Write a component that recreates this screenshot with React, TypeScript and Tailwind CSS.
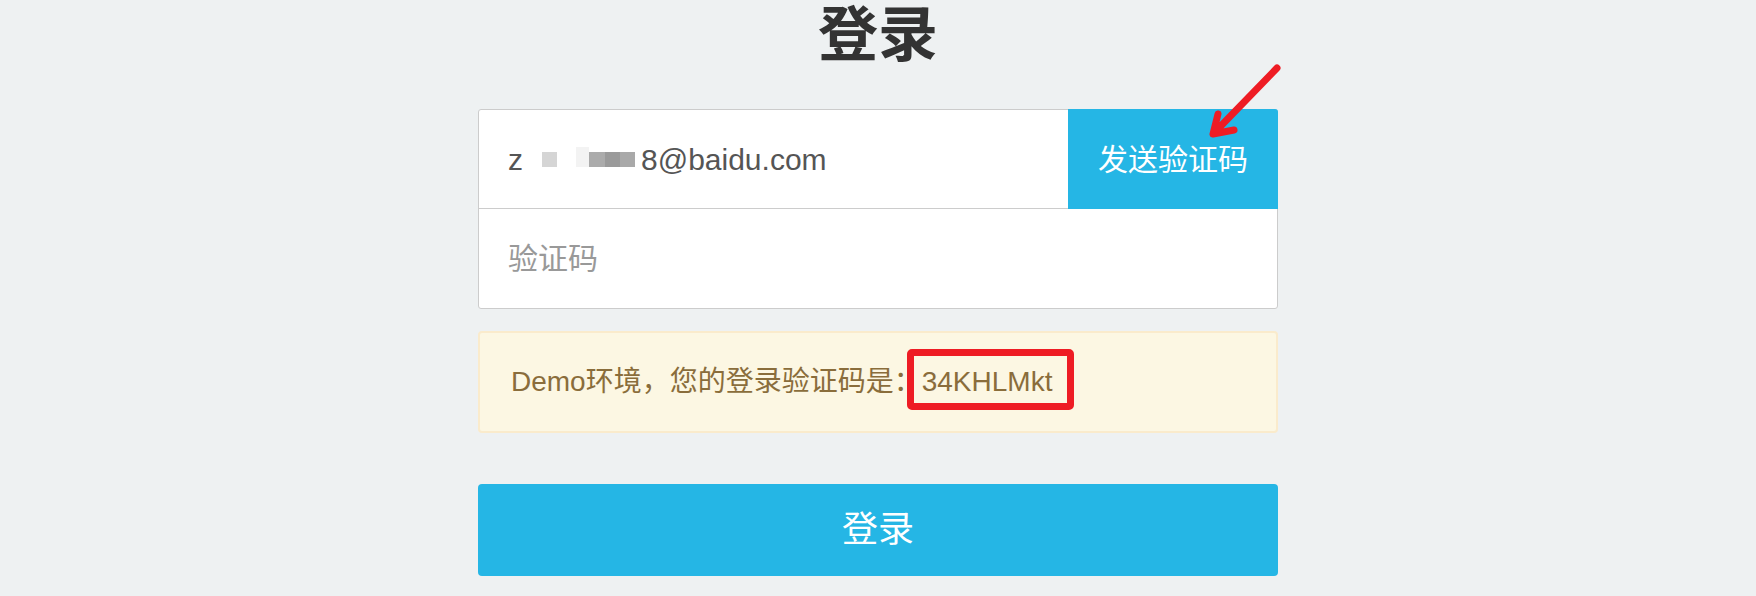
import React from 'react';

const fontStack = "font-['Liberation_Sans','Noto_Sans_CJK_SC',sans-serif]";

function MaskedEmail() {
  // blurred part of the address in the screenshot
  return (
    <div className="flex items-center">
      <span>z</span>
      <span className="ml-[19px] w-[15px] h-[15px] bg-[#d5d5d5]" />
      <span className="ml-[19px] w-[13px] h-[20px] bg-[#f3f3f3] self-start mt-[10px]" />
      <span className="w-[16px] h-[15px] bg-[#ababab]" />
      <span className="w-[15px] h-[15px] bg-[#9a9a9a]" />
      <span className="w-[15px] h-[15px] bg-[#a9a9a9]" />
      <span className="ml-[6px]">8@baidu.com</span>
    </div>
  );
}

export default function App() {
  return (
    <div className={`min-h-screen bg-[#eef1f2] ${fontStack}`}>
      <div className="relative w-[800px] mx-auto pt-[6px]">
        <h1 className="text-center text-[60px] leading-none font-bold text-[#333]">登录</h1>

        {/* Email + code inputs */}
        <div className="mt-[43px] bg-white border border-[#cccccc] rounded-[3px]">
          <div className="flex h-[99px] border-b border-[#cccccc]">
            <div className="flex-1 flex items-center pl-[29px] text-[30px] text-[#555]">
              <MaskedEmail />
            </div>
            <button className="-mt-px -mr-px w-[210px] h-[100px] bg-[#25b6e5] text-white text-[30px] rounded-tr-[3px]">
              发送验证码
            </button>
          </div>
          <div className="h-[99px] flex items-center pl-[29px] text-[30px] text-[#999]">
            验证码
          </div>
        </div>

        {/* Demo notice */}
        <div className="mt-[22px] h-[102px] flex items-center pl-[31px] bg-[#fcf7e3] border-2 border-[#faebcc] rounded-[4px] text-[28px] text-[#8a6d3b]">
          <span>Demo环境，您的登录验证码是：</span>
          <span className="relative inline-block leading-[28px]">
            34KHLMkt
            <span className="absolute -left-[15px] -right-[22px] -top-[19px] -bottom-[14px] border-[7px] border-[#ee1c24] rounded-[5px]" />
          </span>
        </div>

        <button className="mt-[51px] w-full h-[92px] bg-[#25b6e5] text-white text-[36px] rounded-[4px]">
          登录
        </button>

        {/* red annotation arrow */}
        <svg
          className="absolute left-[700px] top-[50px] w-[100px] h-[100px] overflow-visible pointer-events-none"
          viewBox="0 0 100 100"
        >
          <path
            d="M99 18 L36 83 M40 64 L35 84 L56 80"
            fill="none"
            stroke="#ee1c24"
            strokeWidth="7"
            strokeLinecap="round"
            strokeLinejoin="round"
          />
        </svg>
      </div>
    </div>
  );
}
